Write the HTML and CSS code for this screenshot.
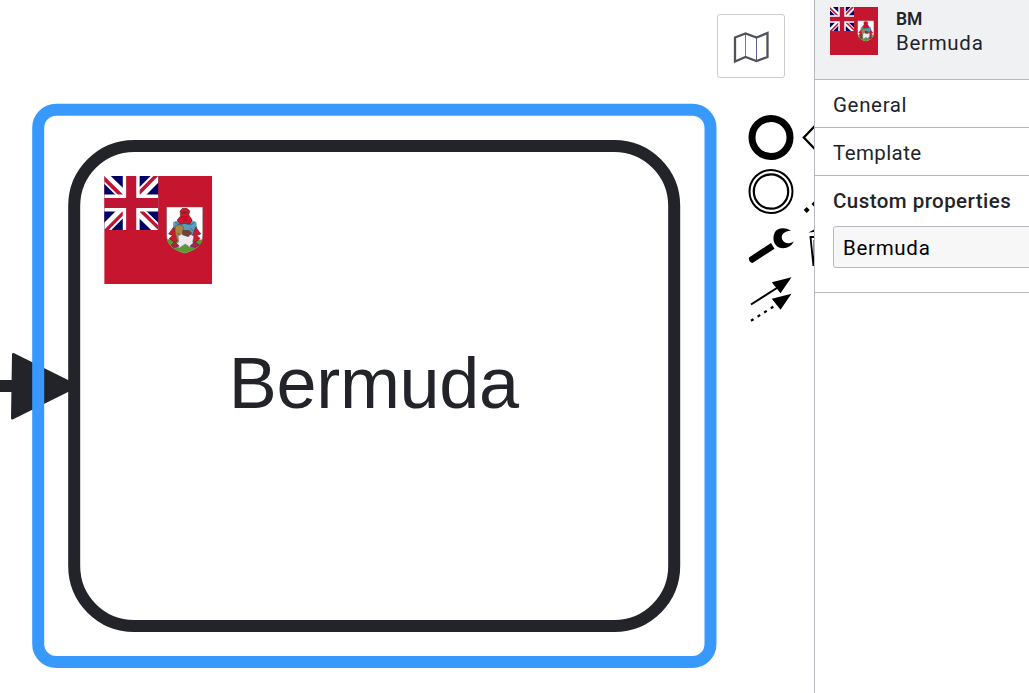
FILE: index.html
```html
<!DOCTYPE html>
<html lang="en">
<head>
<meta charset="utf-8">
<title>Bermuda</title>
<link rel="stylesheet" href="styles.css">
</head>
<body>
<svg class="defs" width="0" height="0" aria-hidden="true">
  <symbol id="flag" viewBox="0 0 108 108">
    <rect width="108" height="108" fill="#c6162f"/>
    <g transform="scale(.10547)">
      <path fill="#000066" d="M0 0h512v512H0z"/>
      <path fill="#fff" d="M512 0v64L322 256l190 187v69h-67L254 324 68 512H0v-68l186-187L0 74V0h62l192 188L440 0z"/>
      <path fill="#c01434" d="m184 324 11 34L42 512H0v-3zm124-12 54 8 150 147v45zM512 0 320 196l-4-44L466 0zM0 1l193 189-59-8L0 49z"/>
      <path fill="#fff" d="M176 0v512h160V0zM0 176v160h512V176z"/>
      <path fill="#c01434" d="M0 208v96h512v-96zM208 0v512h96V0z"/>
    </g>
    <path d="M62.4 31h36.2v28c0 10-7 15-18.1 18.200C69.400 74 62.400 69 62.400 59z" fill="#fff" stroke="#6d5152" stroke-width=".5"/>
    <path d="M62.700 63.500q9-1.500 18 0t17.600 0C96 71 89 74.800 80.500 77 72 74.800 65 71 62.700 63.500z" fill="#5d9732"/>
    <path d="M69 46l5-1.500 6.500 2 6.500-2 5 1.500 1 6-5 9-7.500 5-7.500-5-4-9z" fill="#5a9dc0"/>
    <path d="M76 35l2-2.500h5l2.500 2.500-1 4 3.500 5-2 3.500H75.500l-2.500-3.500 3.500-4z" fill="#d5142b" stroke="#70151f" stroke-width=".7"/>
    <path d="M77 36.500h6M77.500 41h6M79 44h4" stroke="#641924" stroke-width=".8"/>
    <path d="M69.500 51l-5 7 4 1.500-3.500 3 6 4.500 4-5-3-4zM91.500 51l5 7-4 1.500 3.500 3-6 4.500-4-5 3-4z" fill="#d01830" stroke="#671b25" stroke-width=".7"/>
    <path d="M71 50l4-1.500 4 2 1 6-2 5-5 3-2-8z" fill="#ab8446" stroke="#65502a" stroke-width=".6"/>
    <path d="M74 60l6.500-4 9 4-1 6 3 4-6 1-4.500-3-6 4-4.500-3 4-3z" fill="#eee9ef" stroke="#858092" stroke-width=".6"/>
    <path d="M78 54l7 0 3 3-4 4-6-2z" fill="#6b4637"/>
    <path d="M67 69l3.500-3 4.500 4-5.500 1.500zM86 70l4.500-4 4.500 3-4 2.500z" fill="#c51c35" stroke="#383070" stroke-width=".8"/>
    <path d="M71 46q4 5 9.500 1 5.500 4 10-1M73 57l3 2M86 52l3 3" fill="none" stroke="#305f7c" stroke-width=".8"/>
  </symbol>
</svg>
<div class="app">
  <main class="canvas">
    <svg class="diagram" viewBox="0 0 814 693">
      <path d="M0 386h20" stroke="#22242a" stroke-width="12"/>
      <path d="M13.500 354.500 77 386 12.500 418z" fill="#22242a" stroke="#22242a" stroke-width="3" stroke-linejoin="round"/>
      <rect x="74.200" y="146" width="600" height="480" rx="60" fill="#fff" stroke="#22242a" stroke-width="12"/>
      <use href="#flag" x="104.200" y="176" width="108" height="108"/>
      <text class="task-label" x="228.800" y="408">Bermuda</text>
      <rect x="38.200" y="109.800" width="672.300" height="552.300" rx="18" fill="none" stroke="#3899fd" stroke-width="12"/>
      <g fill="none" stroke="#000">
        <circle cx="771" cy="137.500" r="19" stroke-width="7"/>
        <circle cx="771" cy="191.500" r="21.500" stroke-width="2"/>
        <circle cx="771" cy="191.500" r="17.200" stroke-width="2.200"/>
        <path d="M820 120.500 803.800 137.500 820 154.500" stroke-width="2.300"/>
        <path d="M751 304.500 780 286" stroke-width="2"/>
        <path d="M751 320.800 776 305" stroke-width="2.200" stroke-dasharray="3 4.800"/>
        <path d="M820 237H810.500L813.500 266M814.500 240v26" stroke-width="1.900"/>
      </g>
      <path d="M791 230.800C785 227 777 227.500 774.500 233 772 239 774 245 779 247.500 785 250 792 246 793.800 241.500 789 244.500 784 243.500 782.200 239.500 780.500 235 784 231 791 230.800z"/>
      <path d="M749 257.500 771 243 774.500 248.800 752.500 263Q748.500 262.500 749 257.500z"/>
      <path d="M791.500 277.200 771.800 282.300 780.500 293.200zM791.500 293.700 771.800 298.800 780.500 309.700z"/>
      <path d="M803.700 210l3-3 3 3-3 3zM811.500 204l3-3v6z"/>
      <path d="M808.500 232.500 814 229.500v2.500z"/>
    </svg>
    <button class="map-toggle" aria-label="Toggle minimap">
      <svg width="36" height="32" viewBox="0 0 36 32">
        <path d="M23.500 6.500v23" fill="none" stroke="#59609e" stroke-width="1"/>
        <path d="M12.500 2.500v23" stroke="#5c8f78" stroke-width="1"/>
        <path d="M2 6.500 12.500 2.500 23.500 6.500 34.500 2V26L23.500 30 12.500 26 2 30.500z" fill="none" stroke="#50525a" stroke-width="2.300"/>
      </svg>
    </button>
  </main>
  <aside class="panel">
    <header class="panel-header">
      <svg class="panel-flag"><use href="#flag"/></svg>
      <div class="heading"><strong class="code">BM</strong><span class="name">Bermuda</span></div>
    </header>
    <section class="group"><span class="general">General</span></section>
    <section class="group"><span class="template">Template</span></section>
    <section class="group group-open">
      <span class="group-title">Custom properties</span>
      <div class="field"><span class="value">Bermuda</span></div>
    </section>
  </aside>
</div>
</body>
</html>
```
FILE: styles.css
```css
* { box-sizing: border-box; }
body { margin: 0; overflow: hidden; background: #fff; }
.defs { position: absolute; }
.app { display: flex; width: 1029px; height: 693px; overflow: hidden; }
.canvas { position: relative; width: 814px; height: 693px; flex: none; overflow: hidden; }
.diagram { display: block; width: 814px; height: 693px; }
.task-label { font: 72px "Liberation Sans", Arial, sans-serif; letter-spacing: -.3px; fill: #22242a; }
.map-toggle {
  position: absolute; top: 14px; right: 29px; width: 68px; height: 64px;
  display: flex; align-items: center; justify-content: center; padding: 2px 0 0;
  background: #fff; border: 1px solid #ccc; border-radius: 3px;
}
.panel {
  width: 215px; height: 693px; flex: none; overflow: hidden; white-space: nowrap;
  border-left: 1px solid #b8b7c6; background: #fff; color: #22242a;
  font: 20.500px/26px Roboto, sans-serif;
}
.panel-header {
  display: flex; gap: 18px; height: 80px; padding: 7px 0 0 15px;
  background: #f0f1f3; border-bottom: 1px solid #b8b7c6;
}
.panel-flag { width: 48px; height: 48px; flex: none; }
.heading { display: flex; flex-direction: column; }
.code { font-size: 17.500px; font-weight: 600; line-height: 25px; }
.name { line-height: 23px; letter-spacing: .700px; }
.group { height: 48px; padding: 12px 0 0 18px; border-bottom: 1px solid #b8b7c6; }
.general { letter-spacing: .650px; }
.template { letter-spacing: .400px; }
.group-open { height: 117px; }
.group-title { display: block; font-weight: 500; letter-spacing: .450px; }
.field {
  width: 240px; height: 42px; margin-top: 12px; padding: 8px 0 0 9px;
  border: 1px solid #b8b7c6; border-radius: 3px; background: #f7f7f8; color: #000;
}
.value { letter-spacing: .700px; }
```
